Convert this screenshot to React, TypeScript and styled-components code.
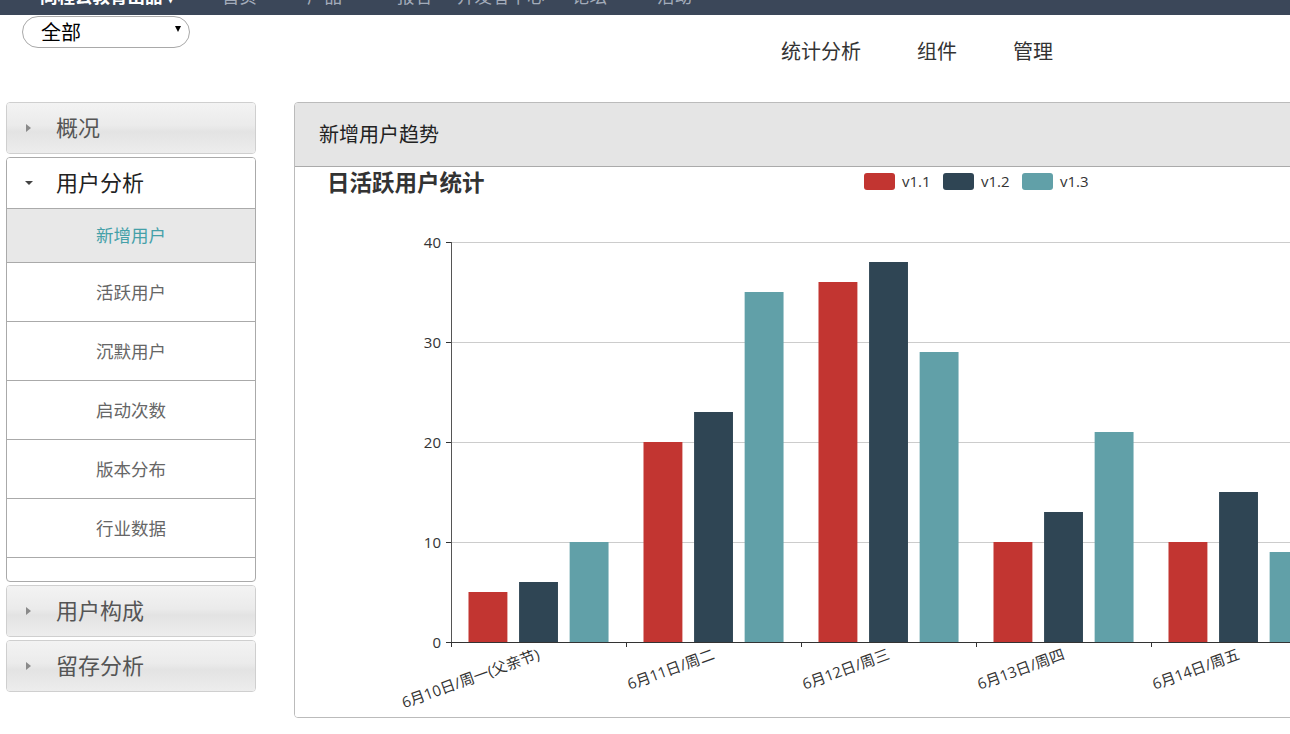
import styled, { createGlobalStyle } from 'styled-components';

const GlobalStyle = createGlobalStyle`
  html, body {
    margin: 0;
    padding: 0;
  }
  body {
    background: #fff;
    overflow: hidden;
    font-family: 'Noto Sans CJK SC', 'Open Sans', sans-serif;
  }
`;

// 顶部导航（页面已向下滚动，只露出下半截）
const topLinks = [
  { label: '同程云教育出品 ▾', width: 182, brand: true },
  { label: '首页', width: 85 },
  { label: '产品', width: 90 },
  { label: '报名', width: 60 },
  { label: '开发者中心', width: 115 },
  { label: '论坛', width: 85 },
  { label: '活动', width: 80 },
];

const tabs = ['统计分析', '组件', '管理'];

const menu = [
  { title: '概况', open: false, items: [] as string[] },
  {
    title: '用户分析',
    open: true,
    items: ['新增用户', '活跃用户', '沉默用户', '启动次数', '版本分布', '行业数据'],
  },
  { title: '用户构成', open: false, items: [] as string[] },
  { title: '留存分析', open: false, items: [] as string[] },
];

const days = ['6月10日/周一(父亲节)', '6月11日/周二', '6月12日/周三', '6月13日/周四', '6月14日/周五', '6月15日/周六'];
const series = [
  { name: 'v1.1', color: '#c23531', data: [5, 20, 36, 10, 10, 8] },
  { name: 'v1.2', color: '#2f4554', data: [6, 23, 38, 13, 15, 12] },
  { name: 'v1.3', color: '#61a0a8', data: [10, 35, 29, 21, 9, 14] },
];

const AXIS_X = 156;
const AXIS_Y = 475;
const CAT_W = 175;
const BAR_W = 38.9;
const BAR_GAP = 11.67;

const Chart = () => (
  <ChartSvg width={1098} height={550}>
    <text x={32} y={24} fontSize={22.5} fontWeight={700} fill="#333">
      日活跃用户统计
    </text>
    {series.map((s, i) => (
      <g key={s.name}>
        <rect x={569 + i * 79} y={6} width={31} height={17} rx={3} fill={s.color} />
        <text x={607 + i * 79} y={13.5} fontSize={15} fill="#333" dominantBaseline="central">
          {s.name}
        </text>
      </g>
    ))}
    {[40, 30, 20, 10, 0].map((v, k) => {
      const y = 75 + k * 100 + 0.5;
      return (
        <g key={v}>
          {v > 0 && <line x1={AXIS_X} x2={1098} y1={y} y2={y} stroke="#ccc" />}
          <line x1={AXIS_X - 5} x2={AXIS_X} y1={y} y2={y} stroke="#333" />
          <text x={146} y={y - 1} fontSize={15} fill="#333" textAnchor="end" dominantBaseline="central">
            {v}
          </text>
        </g>
      );
    })}
    {days.map((d, i) => {
      const c = AXIS_X + i * CAT_W;
      const cx = c + CAT_W / 2;
      return (
        <g key={d}>
          {series.map((s, j) => (
            <rect
              key={s.name}
              x={c + 17.5 + j * (BAR_W + BAR_GAP)}
              y={AXIS_Y - s.data[i] * 10}
              width={BAR_W}
              height={s.data[i] * 10}
              fill={s.color}
            />
          ))}
          <line x1={c + 0.5} x2={c + 0.5} y1={AXIS_Y} y2={AXIS_Y + 5} stroke="#333" />
          <text
            x={cx}
            y={AXIS_Y + 11}
            fontSize={15}
            fill="#333"
            textAnchor="end"
            dominantBaseline="central"
            transform={`rotate(-20 ${cx} ${AXIS_Y + 11})`}
          >
            {d}
          </text>
        </g>
      );
    })}
    <line x1={AXIS_X + 0.5} x2={AXIS_X + 0.5} y1={75} y2={AXIS_Y} stroke="#555" />
    <line x1={AXIS_X} x2={1098} y1={AXIS_Y + 0.5} y2={AXIS_Y + 0.5} stroke="#333" />
  </ChartSvg>
);

export default function App() {
  return (
    <Page>
      <GlobalStyle />
      <TopBar>
        {topLinks.map((l) => (
          <TopLink key={l.label} $width={l.width} $brand={l.brand}>
            {l.label}
          </TopLink>
        ))}
      </TopBar>
      <Toolbar>
        <SelectBox>
          全部
          <SelectArrow />
        </SelectBox>
        <TabNav>
          {tabs.map((t) => (
            <Tab key={t}>{t}</Tab>
          ))}
        </TabNav>
      </Toolbar>
      <Content>
        <Sidebar>
          {menu.map((m) => (
            <Section key={m.title} $open={m.open}>
              <SectionHead $open={m.open}>
                <CaretBox>{m.open ? <CaretDown /> : <CaretRight />}</CaretBox>
                <SectionTitle $open={m.open}>{m.title}</SectionTitle>
              </SectionHead>
              {m.items.map((it, idx) => (
                <MenuItem key={it} $active={idx === 0}>
                  {it}
                </MenuItem>
              ))}
            </Section>
          ))}
        </Sidebar>
        <Panel>
          <PanelHead>新增用户趋势</PanelHead>
          <PanelBody>
            <Chart />
          </PanelBody>
        </Panel>
      </Content>
    </Page>
  );
}

const Page = styled.div`
  width: 1290px;
  height: 734px;
  overflow: hidden;
`;

const TopBar = styled.div`
  height: 15px;
  background: #3b4759;
  display: flex;
  align-items: flex-end;
  padding-left: 40px;
  overflow: hidden;
`;

const TopLink = styled.div<{ $width: number; $brand?: boolean }>`
  flex: 0 0 ${(p) => p.$width}px;
  margin-bottom: 9px;
  font-size: 17.5px;
  line-height: 20px;
  white-space: nowrap;
  color: ${(p) => (p.$brand ? '#ffffff' : '#a3acba')};
  font-weight: ${(p) => (p.$brand ? 700 : 400)};
`;

const Toolbar = styled.div`
  height: 87px;
  display: flex;
  align-items: flex-start;
  padding-left: 22px;
`;

const SelectBox = styled.div`
  width: 168px;
  height: 32px;
  box-sizing: border-box;
  margin-top: 1px;
  padding: 0 8px 1px 18px;
  border: 1px solid #a9a9a9;
  border-radius: 16px;
  display: flex;
  align-items: center;
  justify-content: space-between;
  font-size: 20px;
  color: #000;
`;

const SelectArrow = styled.span`
  width: 0;
  height: 0;
  margin-top: -5px;
  border-left: 3px solid transparent;
  border-right: 3px solid transparent;
  border-top: 6px solid #000;
`;

const TabNav = styled.div`
  display: flex;
  margin-left: 563px;
  margin-top: 22px;
`;

const Tab = styled.div`
  padding: 0 28px;
  line-height: 28px;
  font-size: 20px;
  color: #333;
`;

const Content = styled.div`
  display: flex;
  align-items: flex-start;
  gap: 38px;
  padding-left: 6px;
`;

const Sidebar = styled.div`
  width: 250px;
  flex-shrink: 0;
  display: flex;
  flex-direction: column;
  gap: 3px;
`;

const Section = styled.div<{ $open?: boolean }>`
  border: 1px solid ${(p) => (p.$open ? '#aaa' : '#cfcfcf')};
  border-radius: 4px;
  overflow: hidden;
  padding-bottom: ${(p) => (p.$open ? '23px' : '0')};
`;

const SectionHead = styled.div<{ $open?: boolean }>`
  height: 50px;
  display: flex;
  align-items: center;
  padding-left: 17px;
  background: ${(p) =>
    p.$open
      ? '#fff'
      : 'linear-gradient(to bottom, #f3f3f3 0%, #ebebeb 45%, #e3e3e3 58%, #ededed 100%)'};
  border-bottom: ${(p) => (p.$open ? '1px solid #aaa' : 'none')};
`;

const CaretBox = styled.div`
  width: 9px;
  height: 9px;
  display: flex;
  align-items: center;
  justify-content: center;
`;

const CaretRight = styled.span`
  width: 0;
  height: 0;
  border-top: 4.5px solid transparent;
  border-bottom: 4.5px solid transparent;
  border-left: 5px solid #8a8a8a;
`;

const CaretDown = styled.span`
  width: 0;
  height: 0;
  border-left: 4.5px solid transparent;
  border-right: 4.5px solid transparent;
  border-top: 4px solid #444;
`;

const SectionTitle = styled.span<{ $open?: boolean }>`
  margin-left: 23px;
  margin-bottom: 4px;
  font-size: 22px;
  color: ${(p) => (p.$open ? '#222' : '#555')};
`;

const MenuItem = styled.div<{ $active?: boolean }>`
  height: ${(p) => (p.$active ? '51px' : '56px')};
  padding-bottom: 2px;
  border-bottom: 1px solid #aaa;
  display: flex;
  align-items: center;
  justify-content: center;
  font-size: 17.5px;
  color: ${(p) => (p.$active ? '#45a0a8' : '#666')};
  background: ${(p) => (p.$active ? '#e8e8e8' : '#fff')};
`;

const Panel = styled.div`
  width: 1100px;
  flex-shrink: 0;
  border: 1px solid #bbb;
  border-radius: 4px;
  overflow: hidden;
`;

const PanelHead = styled.div`
  height: 61px;
  padding-bottom: 2px;
  background: #e5e5e5;
  border-bottom: 1px solid #aaa;
  padding-left: 24px;
  display: flex;
  align-items: center;
  font-size: 20px;
  color: #222;
`;

const PanelBody = styled.div`
  height: 550px;
  background: #fff;
`;

const ChartSvg = styled.svg`
  display: block;
  font-family: 'Open Sans', 'Noto Sans CJK SC', sans-serif;
`;
